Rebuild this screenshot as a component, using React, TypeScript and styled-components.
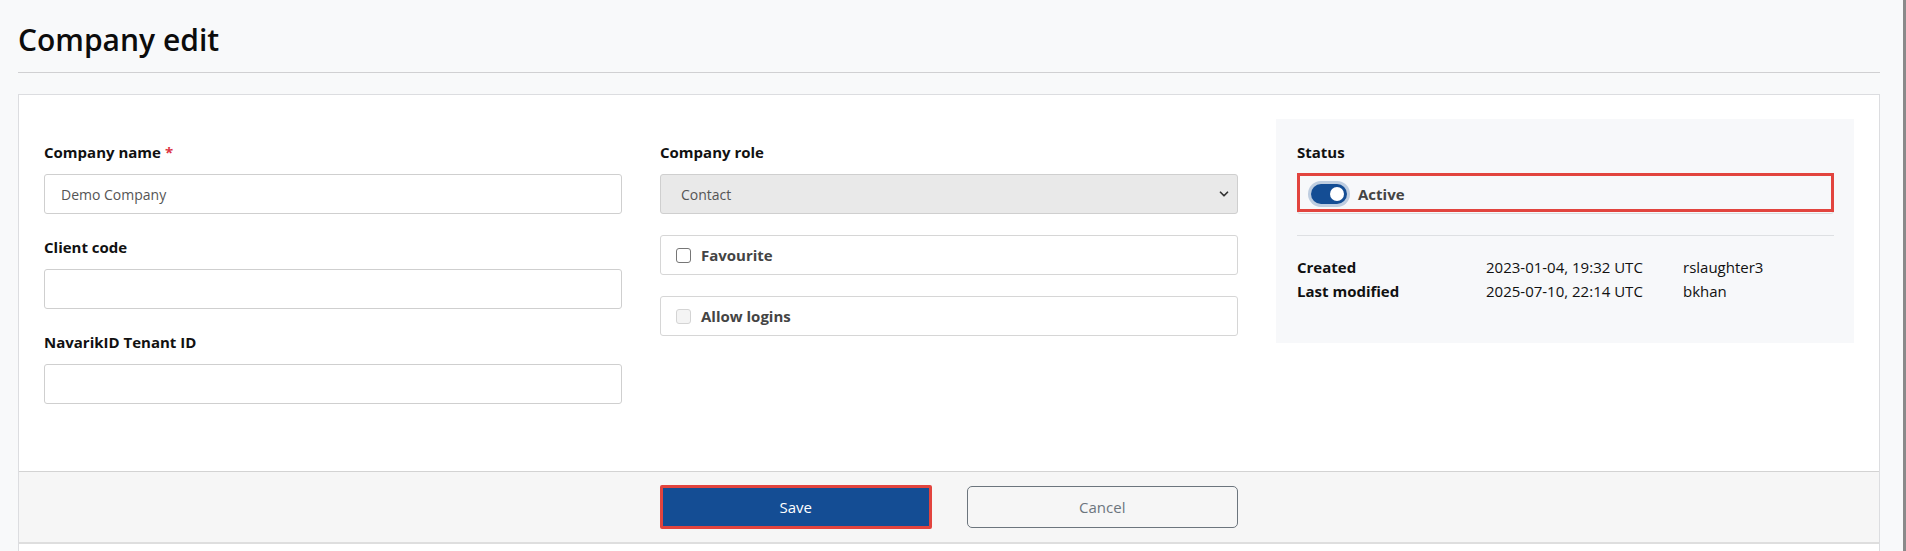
import React from "react";
import styled, { createGlobalStyle } from "styled-components";

const GlobalStyle = createGlobalStyle`
  html, body {
    margin: 0;
    padding: 0;
    background: #f8f9fa;
  }
  body {
    font-family: "Open Sans", "Noto Sans", Arial, sans-serif;
    font-size: 15px;
    color: #111;
  }
  * { box-sizing: border-box; }
`;

const Page = styled.div`
  width: 1906px;
  min-height: 100vh;
  padding: 0 23px 0 18px;
  border-right: 3px solid #8a8a8a;
  background: #f8f9fa;
`;

const Title = styled.h1`
  margin: 0;
  padding: 21px 0 13px;
  font-size: 30px;
  line-height: 38px;
  font-weight: 600;
  color: #0c0c0c;
  border-bottom: 1px solid #d0d0d2;
`;

const Card = styled.section`
  margin-top: 21px;
  background: #fff;
  border: 1px solid #dcdde0;
  border-bottom: none;
`;

const CardBody = styled.div`
  display: grid;
  grid-template-columns: repeat(3, 1fr);
  column-gap: 38px;
  padding: 45px 25px 46px;
`;

const Column = styled.div`
  display: flex;
  flex-direction: column;
`;

const FormGroup = styled.div`
  display: flex;
  flex-direction: column;
  margin-bottom: 21px;
`;

const Label = styled.label`
  font-size: 15px;
  line-height: 24px;
  font-weight: 700;
  color: #111;
  margin-bottom: 10px;
`;

const Required = styled.span`
  color: #dc3545;
  margin-left: 4px;
`;

const TextInput = styled.input`
  height: 40px;
  width: 100%;
  padding: 0 16px;
  border: 1px solid #cfcfcf;
  border-radius: 3px;
  background: #fff;
  font-family: inherit;
  font-size: 14px;
  color: #555;
  outline: none;
`;

const SelectWrap = styled.div`
  position: relative;
  height: 40px;
`;

const Select = styled.select`
  appearance: none;
  width: 100%;
  height: 40px;
  padding: 0 20px;
  border: 1px solid #cfcfcf;
  border-radius: 3px;
  background: #e9e9e9;
  font-family: inherit;
  font-size: 14px;
  color: #555;
  opacity: 1;
`;

const Chevron = styled.svg`
  position: absolute;
  right: 7px;
  top: 50%;
  transform: translateY(-50%);
  pointer-events: none;
`;

const CheckRow = styled.label<{ $disabled?: boolean }>`
  display: flex;
  align-items: center;
  gap: 10px;
  height: 40px;
  margin-bottom: 21px;
  padding: 0 15px;
  border: 1px solid #d6d6d6;
  border-radius: 3px;
  background: #fff;
  font-size: 15px;
  font-weight: 700;
  color: #444;
`;

const Checkbox = styled.input`
  appearance: none;
  margin: 0;
  width: 15px;
  height: 15px;
  border: 1.5px solid #767676;
  border-radius: 3px;
  background: #fff;
  &:disabled {
    border: 1px solid #d4d4d4;
    background: #f4f4f4;
  }
`;

const StatusPanel = styled.div`
  margin-top: -21px;
  padding: 21px 20px 21px 21px;
  background: #f7f8fa;
  align-self: start;
  display: flex;
  flex-direction: column;
`;

const SwitchBox = styled.div`
  position: relative;
  display: flex;
  align-items: center;
  gap: 11px;
  height: 40px;
  padding: 0 13px;
  border: 1px solid #dcdcdc;
  border-radius: 3px;
  &::after {
    content: "";
    position: absolute;
    left: -1px;
    right: -1px;
    top: -2px;
    bottom: 1px;
    border: 3px solid #e2443e;
    pointer-events: none;
  }
`;

const SwitchTrack = styled.span<{ $on: boolean }>`
  position: relative;
  width: 36px;
  height: 20px;
  border-radius: 10px;
  background: ${(p) => (p.$on ? "#144d94" : "#ccc")};
  box-shadow: 0 0 0 3px rgba(20, 77, 148, 0.25);
  flex-shrink: 0;
`;

const SwitchKnob = styled.span<{ $on: boolean }>`
  position: absolute;
  top: 3px;
  left: ${(p) => (p.$on ? "19px" : "3px")};
  width: 14px;
  height: 14px;
  border-radius: 50%;
  background: #fff;
`;

const SwitchText = styled.span`
  font-size: 15px;
  font-weight: 700;
  color: #444;
`;

const Divider = styled.hr`
  margin: 21px 0 19px;
  border: none;
  border-top: 1px solid #dee0e3;
`;

const MetaGrid = styled.div`
  display: grid;
  grid-template-columns: 189px 197px 1fr;
  margin-bottom: 19px;
  font-size: 15px;
  line-height: 24px;
  color: #111;
`;

const MetaKey = styled.span`
  font-weight: 700;
`;

const MetaValue = styled.span`
  font-weight: 400;
`;

const CardFooter = styled.div`
  display: grid;
  grid-template-columns: repeat(3, 1fr);
  column-gap: 38px;
  padding: 13px 25px;
  background: #f6f6f6;
  border-top: 1px solid #d3d3d3;
  border-bottom: 2px solid #dedede;
`;

const ButtonPair = styled.div`
  grid-column: 2;
  display: grid;
  grid-template-columns: 1fr 1fr;
  column-gap: 35px;
`;

const Button = styled.button<{ $variant: "primary" | "secondary" }>`
  height: 44px;
  font-family: inherit;
  font-size: 15px;
  border-radius: ${(p) => (p.$variant === "primary" ? "2px" : "5px")};
  cursor: pointer;
  ${(p) =>
    p.$variant === "primary"
      ? `
    background: #144d94;
    color: #fff;
    border: 3px solid #e2443e;
  `
      : `
    background: transparent;
    color: #6c757d;
    border: 1px solid #6c757d;
    margin: 1px 0;
    height: 42px;
  `}
`;

const CardRest = styled.div`
  height: 40px;
  background: #fff;
`;

export default function App() {
  return (
    <>
      <GlobalStyle />
      <Page>
        <Title>Company edit</Title>
        <Card>
          <CardBody>
            <Column>
              <FormGroup>
                <Label>
                  Company name<Required>*</Required>
                </Label>
                <TextInput defaultValue="Demo Company" />
              </FormGroup>
              <FormGroup>
                <Label>Client code</Label>
                <TextInput defaultValue="" />
              </FormGroup>
              <FormGroup>
                <Label>NavarikID Tenant ID</Label>
                <TextInput defaultValue="" />
              </FormGroup>
            </Column>
            <Column>
              <FormGroup>
                <Label>Company role</Label>
                <SelectWrap>
                  <Select disabled defaultValue="contact">
                    <option value="contact">Contact</option>
                  </Select>
                  <Chevron width="14" height="14" viewBox="0 0 24 24" fill="none" stroke="#333" strokeWidth="3" strokeLinecap="round" strokeLinejoin="round">
                    <path d="M6 9l6 6 6-6" />
                  </Chevron>
                </SelectWrap>
              </FormGroup>
              <CheckRow>
                <Checkbox type="checkbox" />
                Favourite
              </CheckRow>
              <CheckRow $disabled>
                <Checkbox type="checkbox" disabled />
                Allow logins
              </CheckRow>
            </Column>
            <StatusPanel>
              <Label>Status</Label>
              <SwitchBox>
                <SwitchTrack $on>
                  <SwitchKnob $on />
                </SwitchTrack>
                <SwitchText>Active</SwitchText>
              </SwitchBox>
              <Divider />
              <MetaGrid>
                <MetaKey>Created</MetaKey>
                <MetaValue>2023-01-04, 19:32 UTC</MetaValue>
                <MetaValue>rslaughter3</MetaValue>
                <MetaKey>Last modified</MetaKey>
                <MetaValue>2025-07-10, 22:14 UTC</MetaValue>
                <MetaValue>bkhan</MetaValue>
              </MetaGrid>
            </StatusPanel>
          </CardBody>
          <CardFooter>
            <ButtonPair>
              <Button $variant="primary">Save</Button>
              <Button $variant="secondary">Cancel</Button>
            </ButtonPair>
          </CardFooter>
          <CardRest />
        </Card>
      </Page>
    </>
  );
}
